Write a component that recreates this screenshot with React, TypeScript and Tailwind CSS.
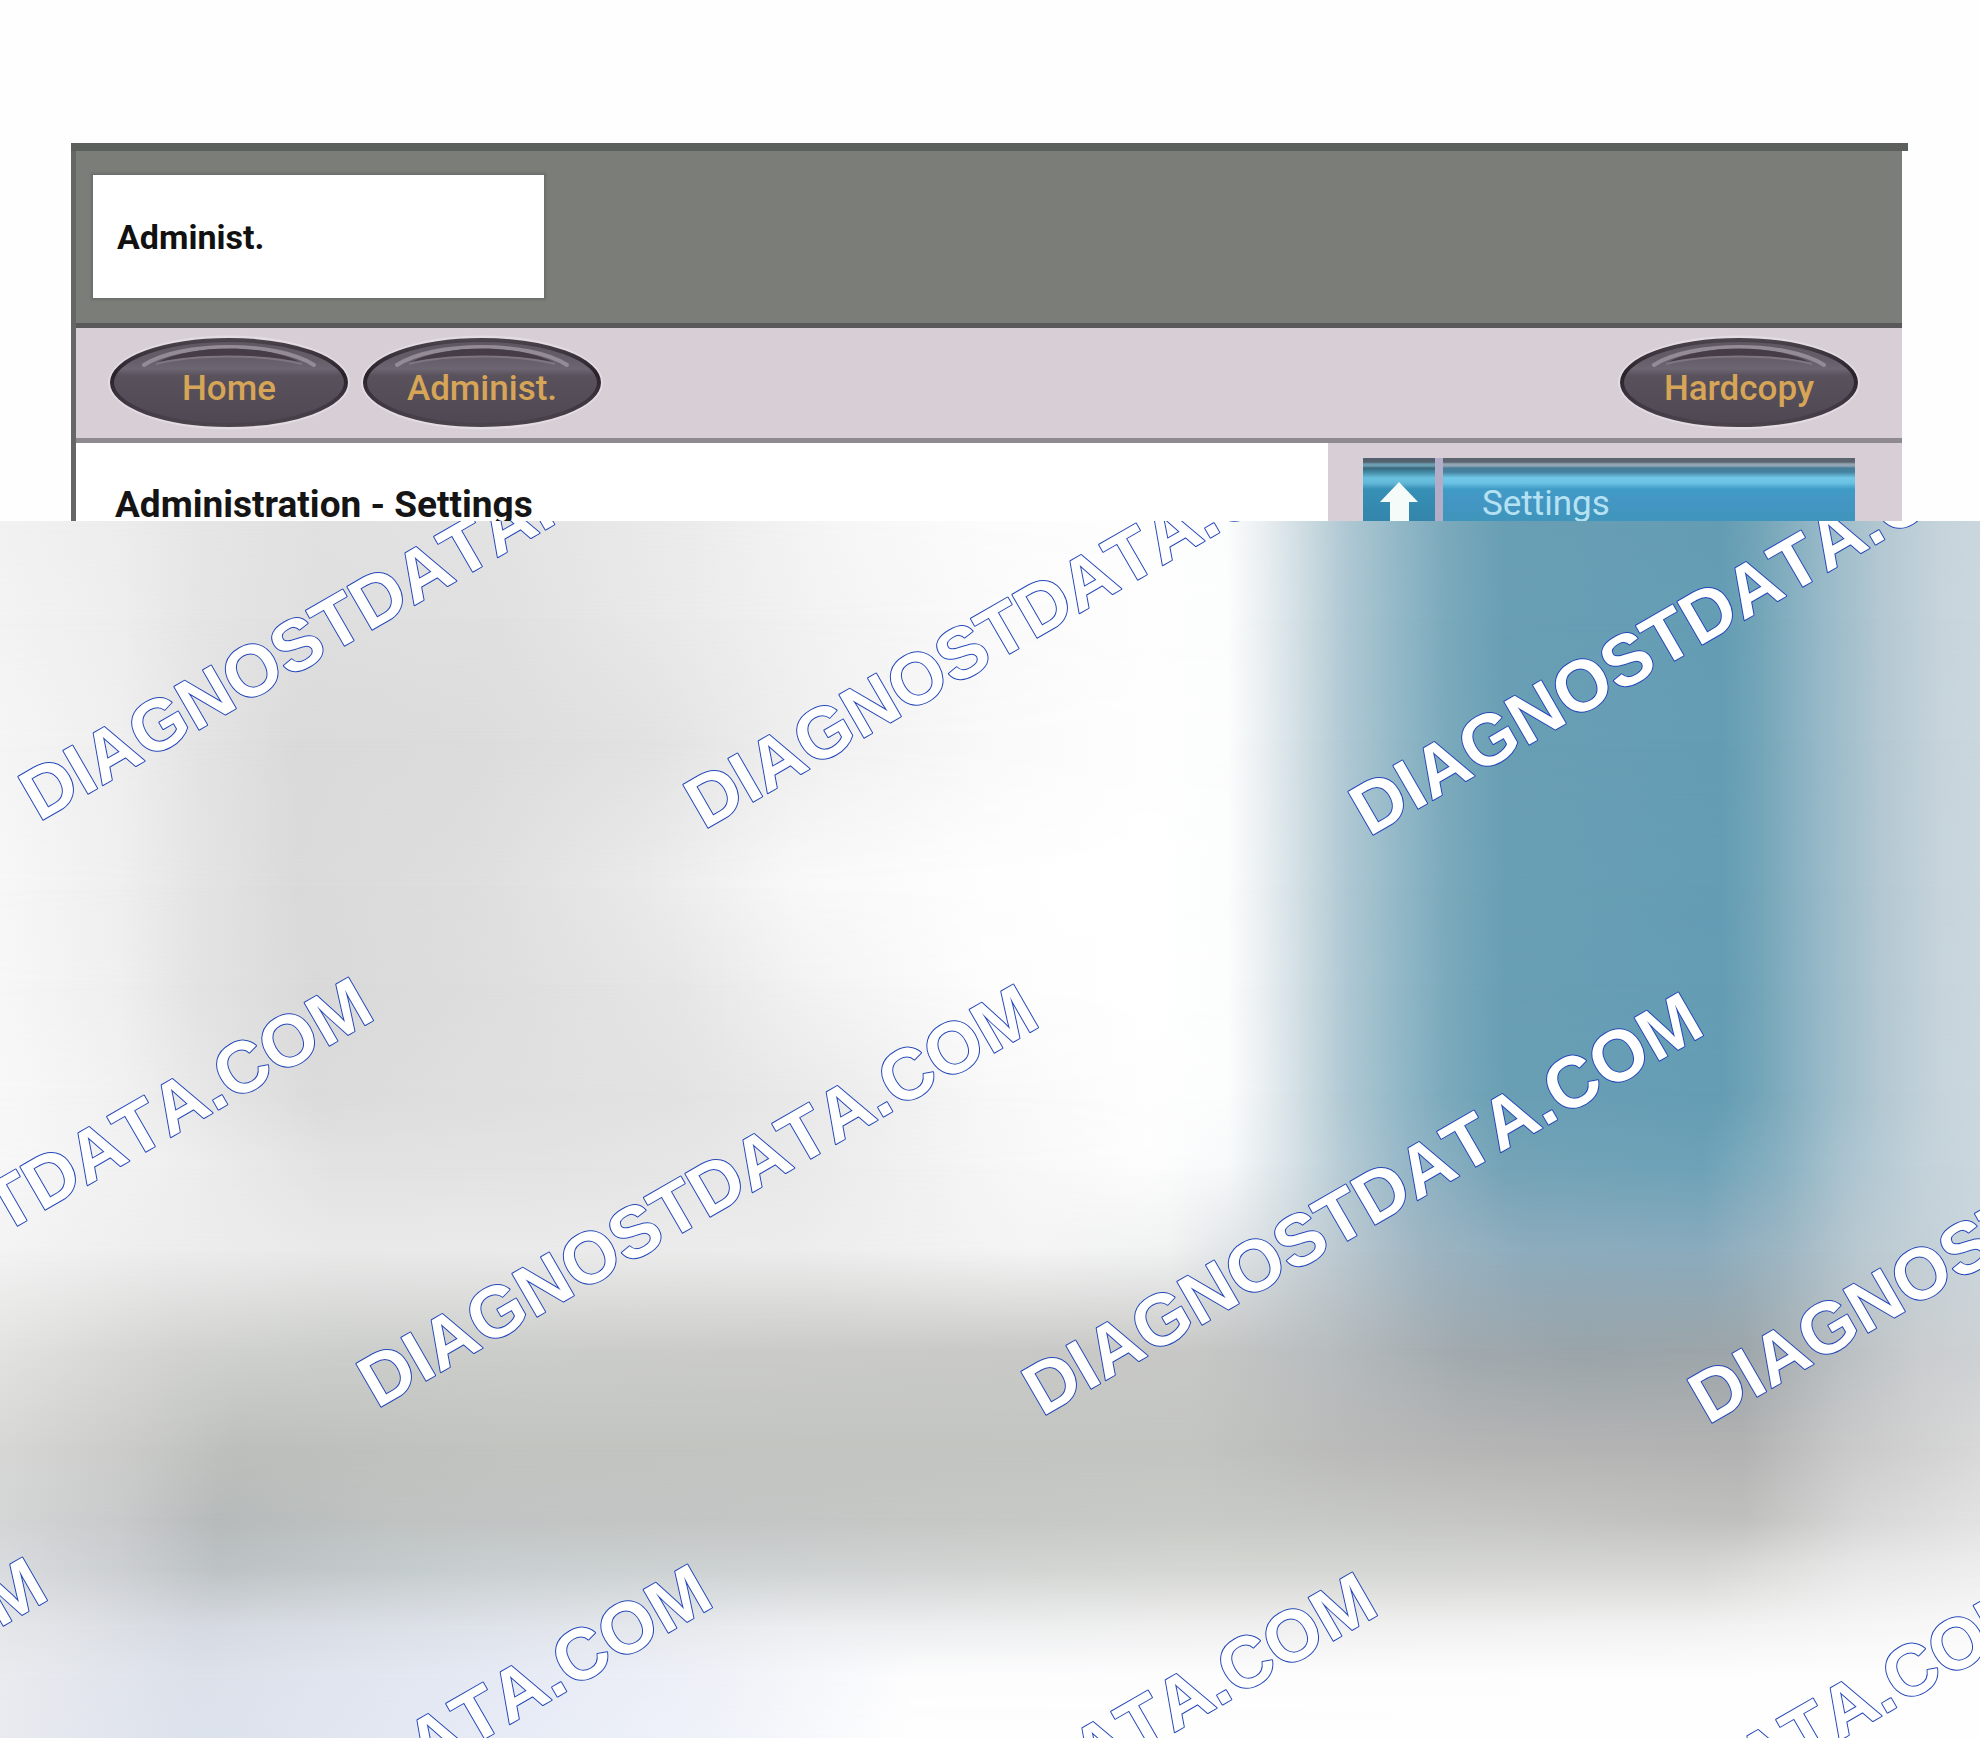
import { useMemo } from "react";
import clsx from "clsx";

type Stop = [number, string];
type Band = { at: number; stops: Stop[] };

const WATERMARK = "DIAGNOSTDATA.COM";

// baseline start of every watermark, in pixels from the top left of the locked area
const MARKS = [
  { x: 39, y: 301 },
  { x: 704, y: 309 },
  { x: 1369, y: 316 },
  { x: -288, y: 881 },
  { x: 377, y: 888 },
  { x: 1042, y: 896 },
  { x: 1708, y: 904 },
  { x: -614, y: 1461 },
  { x: 51, y: 1468 },
  { x: 716, y: 1476 },
  { x: 1381, y: 1484 },
];

// the blue column on the right, same for all the upper bands
const BLUE: Stop[] = [
  [62, "#fcfdfd"],
  [64, "#e7edf0"],
  [66, "#ccdbe1"],
  [68, "#afc8d3"],
  [71, "#8fb6c6"],
  [73, "#7baabc"],
  [76, "#699fb4"],
  [81, "#679eb5"],
  [87, "#649db4"],
  [89, "#75a6b9"],
  [92, "#97b9c8"],
  [95, "#b3c8d2"],
  [98, "#c6d4db"],
  [100, "#cad7de"],
];

// horizontal colour runs of the frosted area, each one fades into the next
const BANDS: Band[] = [
  { at: 0, stops: [[0, "#f2f2f2"], [6, "#ededed"], [10, "#e6e6e6"], [16, "#e1e1e1"], [25, "#e3e3e3"], [35, "#ececec"], [42, "#f6f6f6"], [50, "#fcfcfc"], [58, "#fefefe"], ...BLUE] },
  { at: 8, stops: [[0, "#f3f3f3"], [6, "#eeeeee"], [10, "#e5e5e5"], [16, "#dfdfdf"], [25, "#e0e0e0"], [35, "#ebebeb"], [42, "#f3f3f3"], [50, "#fafafa"], [58, "#fefefe"], ...BLUE] },
  { at: 18, stops: [[0, "#f5f5f5"], [6, "#efefef"], [10, "#e4e4e4"], [15, "#dadada"], [24, "#dcdcdc"], [33, "#e2e2e2"], [42, "#f1f1f1"], [50, "#f9f9f9"], [58, "#fefefe"], ...BLUE] },
  { at: 30, stops: [[0, "#f7f7f7"], [6, "#efefef"], [10, "#e4e4e4"], [15, "#dadada"], [24, "#dedede"], [32, "#e9e9e9"], [40, "#f8f8f8"], [50, "#fefefe"], [58, "#ffffff"], ...BLUE] },
  { at: 38, stops: [[0, "#f7f7f7"], [6, "#efefef"], [10, "#e3e3e3"], [16, "#d9d9d9"], [25, "#dedede"], [34, "#e6e6e6"], [41, "#f3f3f3"], [50, "#fdfdfd"], [58, "#ffffff"], ...BLUE] },
  { at: 47, stops: [[0, "#f8f8f8"], [6, "#f1f1f1"], [10, "#e7e7e7"], [16, "#dbdbdb"], [25, "#dfdfdf"], [34, "#e2e2e2"], [42, "#ebebeb"], [50, "#f8f8f8"], [58, "#fefefe"], ...BLUE] },
  {
    at: 53,
    stops: [[0, "#f7f7f7"], [8, "#f0f0f0"], [17, "#e2e2e2"], [28, "#e3e3e3"], [40, "#e9e9e9"], [50, "#f6f6f6"], [58, "#fdfdfd"], [62, "#f7f9fa"], [65, "#d9e3e8"], [68, "#b4cad4"], [71, "#96b7c7"], [76, "#74a3b7"], [86, "#6da2b7"], [90, "#8ab1c2"], [93, "#a9c3cf"], [97, "#c3d2da"], [100, "#cad7de"]],
  },
  {
    at: 60,
    stops: [[0, "#f3f3f3"], [8, "#ededed"], [17, "#e9e9e9"], [40, "#ececec"], [52, "#f4f4f4"], [59, "#f0f1f1"], [63, "#dce1e4"], [68, "#b9c7cf"], [72, "#9eb5c2"], [77, "#8dacbd"], [86, "#8aabbd"], [90, "#9db6c3"], [94, "#bac9d1"], [100, "#cbd6dc"]],
  },
  {
    at: 68,
    stops: [[0, "#e3e3e2"], [9, "#d3d4d2"], [17, "#cdcfcc"], [40, "#cbccc9"], [60, "#c8c9c7"], [67, "#b8bdbf"], [74, "#a0a9ae"], [80, "#99a4a9"], [88, "#9da6aa"], [93, "#b9bfc2"], [97, "#cacdcf"], [100, "#cdd1d4"]],
  },
  {
    at: 76,
    stops: [[0, "#d7d7d6"], [7, "#cacbc9"], [12, "#bcbfbb"], [26, "#c2c4c0"], [60, "#c3c5c1"], [68, "#b9bab9"], [76, "#b4b4b4"], [88, "#b2b2b2"], [93, "#c8c8c8"], [100, "#d8d8d8"]],
  },
  {
    at: 82,
    stops: [[0, "#d4d6d6"], [6, "#c9cacb"], [11, "#b6baba"], [20, "#bfc3c2"], [40, "#c4c6c5"], [60, "#c8cac6"], [76, "#c5c6c3"], [88, "#bfc0be"], [94, "#d7d7d7"], [100, "#e2e2e2"]],
  },
  {
    at: 86,
    stops: [[0, "#d9dcde"], [6, "#cccfd2"], [11, "#bcc2c4"], [25, "#c9cfd0"], [40, "#ced2d2"], [60, "#d4d6d2"], [86, "#d5d6d3"], [94, "#e8e8e8"], [100, "#ededed"]],
  },
  {
    at: 91,
    stops: [[0, "#e5e7ea"], [10, "#d6dae1"], [25, "#dfe3ea"], [40, "#eceef0"], [60, "#f0f0f0"], [86, "#f2f2f2"], [100, "#f9f9f9"]],
  },
  {
    at: 95,
    stops: [[0, "#e9ebef"], [10, "#dce1ea"], [25, "#e6eaf5"], [36, "#eff1f8"], [46, "#fdfdfe"], [100, "#fefefe"]],
  },
  {
    at: 100,
    stops: [[0, "#e8eaef"], [10, "#dce1ec"], [27, "#e8ecf6"], [37, "#f0f3f9"], [46, "#fefefe"], [100, "#fefefe"]],
  },
];

function OvalButton({ label }: { label: string }) {
  return (
    <button
      type="button"
      className="relative isolate flex h-[89px] w-[238px] items-center justify-center pt-3 text-[35px] leading-[40px] font-medium text-[#d6a557]"
    >
      <svg viewBox="0 0 238 89" className="absolute inset-0 -z-10 h-full w-full overflow-visible" aria-hidden="true">
        <defs>
          <linearGradient id={`face-${label}`} x1="0" y1="0" x2="0" y2="1">
            <stop offset="0" stopColor="#5f5760" />
            <stop offset="0.24" stopColor="#665e69" />
            <stop offset="0.34" stopColor="#6d6571" />
            <stop offset="0.42" stopColor="#59525c" />
            <stop offset="1" stopColor="#4f4751" />
          </linearGradient>
          <linearGradient id={`rim-${label}`} x1="0" y1="0" x2="0" y2="1">
            <stop offset="0" stopColor="#4a434c" />
            <stop offset="0.4" stopColor="#29222b" />
            <stop offset="0.7" stopColor="#3d3540" />
            <stop offset="1" stopColor="#4b444d" />
          </linearGradient>
        </defs>
        <ellipse cx="119" cy="44.5" rx="121" ry="47" fill="#e3dce3" />
        <ellipse cx="119" cy="44.5" rx="117" ry="42.5" fill={`url(#face-${label})`} stroke={`url(#rim-${label})`} strokeWidth="4" />
        <path d="M34 27 C70 3 168 3 204 27" fill="none" stroke="#938b95" strokeWidth="4" strokeLinecap="round" />
        <path d="M48 24 C84 6 154 6 190 24 C154 17 84 17 48 24Z" fill="#463c47" />
        <path d="M46 26 C84 16 154 16 192 26" fill="none" stroke="#7d7580" strokeWidth="2" />
      </svg>
      {label}
    </button>
  );
}

function FrostedArea() {
  const layers = useMemo(
    () =>
      BANDS.map((band, i) => {
        const from = i === 0 ? 0 : BANDS[i - 1].at;
        const run = band.stops.map(([pos, color]) => `${color} ${pos}%`).join(", ");
        const mask = `linear-gradient(to bottom, transparent ${from}%, black ${band.at}%)`;
        return {
          backgroundImage: `linear-gradient(to right, ${run})`,
          maskImage: i === 0 ? undefined : mask,
        };
      }),
    []
  );

  return (
    <section className="relative min-h-[400px] flex-1 overflow-hidden">
      {layers.map((style, i) => (
        <div key={i} className="absolute inset-0" style={style} />
      ))}
      <svg className="absolute inset-0 h-full w-full" aria-label={WATERMARK}>
        {MARKS.map((m) => (
          <text
            key={`${m.x}-${m.y}`}
            transform={`translate(${m.x} ${m.y}) rotate(-30)`}
            className="fill-white stroke-[#2346b8] stroke-2 font-['Liberation_Sans',Arial,sans-serif] text-[72px] font-bold [font-kerning:none] [paint-order:stroke] [stroke-linejoin:round]"
          >
            {WATERMARK}
          </text>
        ))}
      </svg>
    </section>
  );
}

export default function App() {
  const barLine = "border-b-[5px]";

  return (
    <main className="flex min-h-screen flex-col overflow-hidden bg-[#fefefe] font-[Roboto,sans-serif]">
      <div className="mr-[72px] ml-[71px] pt-[143px]">
        <div className="h-2 bg-[#5c605d]" />
        <div className="mr-1.5 border-l-[5px] border-[#646765]">
          <header className={clsx("bg-[#7a7d78] px-[17px] pt-6 pb-[25px]", barLine, "border-[#5b585c]")}>
            <div className="flex h-[123px] w-[451px] items-center bg-white px-6 shadow-[0_0_2px_2px_#6c6e6b]">
              <span className="text-[34px] leading-[40px] font-bold text-[#111]">Administ.</span>
            </div>
          </header>

          <nav className={clsx("flex items-center gap-[15px] bg-[#d7ced6] pt-[10px] pr-11 pb-[11px] pl-[34px]", barLine, "border-[#8e8a8f]")}>
            <OvalButton label="Home" />
            <OvalButton label="Administ." />
            <div className="ml-auto">
              <OvalButton label="Hardcopy" />
            </div>
          </nav>

          <div className="flex h-[78px] overflow-hidden">
            <div className="flex-1 bg-white px-[39px] pt-[42px]">
              <h1 className="text-[37px] leading-[40px] font-bold whitespace-nowrap text-[#151515]">
                Administration - Settings
              </h1>
            </div>
            <aside className="w-[574px] bg-[#d8cfd6] pt-[15px] pr-[47px] pl-[35px]">
              <div className="flex gap-2 bg-[#b3adc8]">
                <button
                  type="button"
                  aria-label="Up"
                  className="flex h-20 w-[72px] justify-center bg-[linear-gradient(#53606e_0px,#53606e_4px,#6d9db0_6px,#6d9db0_8px,#39677c_10px,#4288a3_14px,#69c0de_20px,#62b8d8_25px,#3790b6_31px,#3385ab_62px)] pt-[24px]"
                >
                  <svg viewBox="0 0 38 50" className="h-[50px] w-[38px]" aria-hidden="true">
                    <path d="M19 0 38 20H29V50H10V20H0Z" fill="#f4fbf8" />
                  </svg>
                </button>
                <button
                  type="button"
                  className="flex h-20 flex-1 items-start bg-[linear-gradient(#5c6470_0px,#5c6470_4px,#93a5b4_6px,#93a5b4_8px,#477d98_10px,#4482a0_14px,#72c8e8_20px,#6ac2e4_25px,#3f9cc6_31px,#4496c4_42px,#3f95bb_62px)] pt-[26px] pl-[39px] text-[35px] leading-[40px] text-[#b5e2f2]"
                >
                  Settings
                </button>
              </div>
            </aside>
          </div>
        </div>
      </div>

      <FrostedArea />
    </main>
  );
}
